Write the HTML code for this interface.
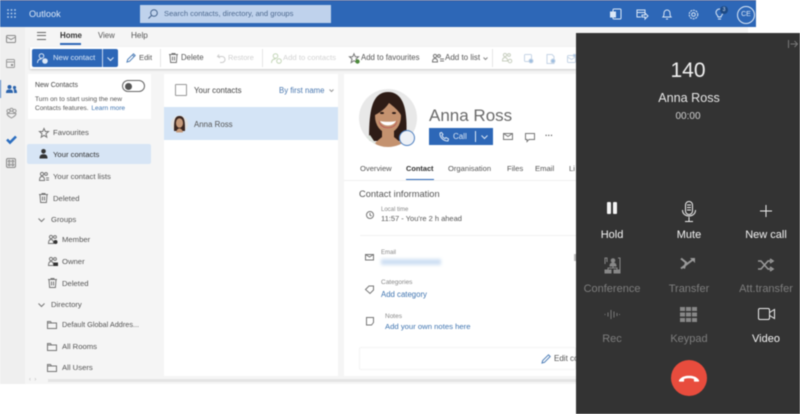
<!DOCTYPE html>
<html><head><meta charset="utf-8">
<style>
html,body{margin:0;padding:0;background:#fff;width:800px;height:414px;overflow:hidden}
body{position:relative;font-family:"Liberation Sans",sans-serif;font-size:7.7px;color:#444}
#app{position:absolute;left:0;top:0;width:800px;height:414px;overflow:hidden;filter:blur(.5px)}
.b{position:absolute}
.t{position:absolute;white-space:nowrap;line-height:12px}
svg{position:absolute;overflow:visible}
svg.l{fill:none;stroke:#777;stroke-width:1}
.lk{color:#3f74b0}
.w{color:#f4f4f4;font-size:11px;text-align:center;width:76px}
.g{color:#7d7d7d;font-size:11px;text-align:center;width:76px}
</style></head><body><div id="app">

<!-- page bg -->
<div class="b" style="left:0;top:27px;width:576px;height:357px;background:#f5f5f5"></div>
<div class="b" style="left:0;top:27px;width:25px;height:357px;background:#efefef"></div>
<div class="b" style="left:576px;top:27px;width:172px;height:6px;background:#f5f5f5"></div>

<!-- header -->
<div class="b" style="left:0;top:0;width:756px;height:27px;background:#2d67b7"></div>
<div class="b" style="left:0;top:0;width:756px;height:1px;background:#4a5f95"></div>
<svg width="10" height="10" style="left:7px;top:9px" fill="#bcd2ee"><circle cx="1" cy="1" r=".9"/><circle cx="4.5" cy="1" r=".9"/><circle cx="8" cy="1" r=".9"/><circle cx="1" cy="4.5" r=".9"/><circle cx="4.5" cy="4.5" r=".9"/><circle cx="8" cy="4.5" r=".9"/><circle cx="1" cy="8" r=".9"/><circle cx="4.5" cy="8" r=".9"/><circle cx="8" cy="8" r=".9"/></svg>
<div class="t" style="left:29px;top:8px;font-size:9.2px;color:#dbe7f6">Outlook</div>
<div class="b" style="left:140px;top:5px;width:191px;height:18px;background:#bfd2ec"></div>
<svg class="l" width="10" height="10" style="left:148px;top:9px;stroke:#44628c"><circle cx="6" cy="4" r="3.3"/><path d="M3.6 6.4 L.5 9.5"/></svg>
<div class="t" style="left:164px;top:8px;font-size:7.6px;color:#4e6a90">Search contacts, directory, and groups</div>

<svg width="12" height="11" style="left:610px;top:9px"><rect x="3" y="0" width="8" height="10" rx="1" fill="none" stroke="#dbe7f6"/><rect x="0" y="2.5" width="6" height="6" fill="#dbe7f6"/></svg>
<svg class="l" width="12" height="11" style="left:636px;top:9px;stroke:#dbe7f6"><path d="M9 4V1H1v7h4M1 3.5h8M6 6h3V4l3 3-3 3V8H6z"/></svg>
<svg class="l" width="10" height="11" style="left:662px;top:9px;stroke:#dbe7f6"><path d="M1 8c1-1 1-2 1-4a3 3 0 0 1 6 0c0 2 0 3 1 4zM4 10h2"/></svg>
<svg class="l" width="11" height="11" style="left:688px;top:9px;stroke:#dbe7f6"><circle cx="5.5" cy="5.5" r="1.8"/><circle cx="5.5" cy="5.5" r="4.3" stroke-dasharray="2 .8"/></svg>
<svg class="l" width="9" height="11" style="left:715px;top:9px;stroke:#dbe7f6"><path d="M3 10h3M3 8c0-2-2-2-2-4.500a3.500 3.500 0 0 1 7 0C8 6 6 6 6 8z"/></svg>
<div class="b" style="left:720px;top:6px;width:8px;height:8px;border-radius:50%;background:#1d4a85;color:#dbe7f6;font-size:5px;line-height:8px;text-align:center">3</div>
<div class="b" style="left:737px;top:6px;width:16px;height:16px;border:1px solid #dbe7f6;border-radius:50%;color:#dbe7f6;font-size:7px;line-height:16px;text-align:center">CE</div>

<!-- left rail -->
<svg class="l" width="11" height="9" style="left:6px;top:35px;stroke:#8a8a8a"><rect x=".5" y=".5" width="9" height="7" rx="1"/><path d="M.5 2l4.500 2.500L9.500 2"/></svg>
<svg class="l" width="10" height="10" style="left:6px;top:59px;stroke:#9a9a9a"><rect x=".5" y=".5" width="8" height="8" rx="1"/><path d="M.5 3h8"/><rect x="5" y="5" width="2" height="2" fill="#8a8a8a" stroke="none"/></svg>
<div class="b" style="left:0;top:80px;width:1px;height:18px;background:#4d7fc0"></div>
<svg width="11" height="9" style="left:6px;top:85px" fill="#2b64ad"><circle cx="3.500" cy="2" r="2"/><circle cx="8.500" cy="2.500" r="1.600"/><path d="M0 8c0-3 1-3.500 3.500-3.500S7 5 7 8zM8 8c0-2 0-3-.5-3.800 2-.4 3.500 0 3.500 3.800z"/></svg>
<svg class="l" width="11" height="11" style="left:6px;top:108px;stroke:#999"><circle cx="2.500" cy="3" r="1.600"/><circle cx="8.500" cy="3" r="1.600"/><circle cx="5.500" cy="1.800" r="1.500"/><path d="M1 5.500c0 2 2 3 4.500 4.500C8 8.500 10 7.500 10 5.500z"/></svg>
<svg width="11" height="9" style="left:6px;top:135px" fill="none" stroke="#2d6fc0" stroke-width="2.600"><path d="M1 4.500l3 3 6-6"/></svg>
<svg class="l" width="10" height="10" style="left:6px;top:158px;stroke:#888"><rect x=".5" y=".5" width="9" height="9" rx="1.500"/><circle cx="3.200" cy="3.200" r="1"/><circle cx="6.800" cy="3.200" r="1"/><circle cx="3.200" cy="6.800" r="1"/><circle cx="6.800" cy="6.800" r="1"/></svg>

<!-- tabs -->
<div class="b" style="left:37px;top:32px;width:9px;height:1px;background:#666;box-shadow:0 3px 0 #666,0 7px 0 #666"></div>
<div class="t" style="left:60px;top:30px;font-size:7.9px;color:#333;font-weight:bold">Home</div>
<div class="b" style="left:60px;top:43px;width:21px;height:1.500px;background:#2d67b7"></div>
<div class="t" style="left:98px;top:30px;color:#555;font-size:7.8px">View</div>
<div class="t" style="left:131px;top:30px;color:#555;font-size:8.2px">Help</div>

<!-- ribbon -->
<div class="b" style="left:30px;top:47px;width:546px;height:22px;background:#fff;box-shadow:0 1px 2px rgba(0,0,0,.18)"></div>
<div class="b" style="left:32px;top:49px;width:86px;height:18px;background:#2d67b7;border-radius:2px"></div>
<div class="b" style="left:102px;top:49px;width:1px;height:18px;background:#c8d9ef"></div>
<svg class="l" width="11" height="11" style="left:37px;top:53px;stroke:#dbe7f6"><circle cx="4.500" cy="3" r="2.300"/><path d="M.5 10c0-3 1.500-4 4-4"/><circle cx="8" cy="8" r="2.300" fill="#dbe7f6"/></svg>
<div class="t" style="left:53px;top:52px;color:#dce8f7;font-size:7.7px">New contact</div>
<svg class="l" width="7" height="4" style="left:107px;top:57px;stroke:#dce8f7"><path d="M.5.500l3 3 3-3"/></svg>
<svg class="l" width="10" height="10" style="left:126px;top:53px;stroke:#4f7fb8"><path d="M1 9l.7-2.500L7.500.800l1.700 1.700L3.500 8.300zM6.500 2l1.700 1.700"/></svg>
<div class="t" style="left:139px;top:52px;color:#555;font-size:7.6px">Edit</div>
<div class="b" style="left:160px;top:49px;width:1px;height:18px;background:#e6e6e6"></div>
<svg class="l" width="9" height="10" style="left:169px;top:53px"><path d="M0 1.500h9M3 1.500V.5h3v1M1 1.500l.6 8h5.800l.6-8M3.500 3.500v4M5.500 3.500v4"/></svg>
<div class="t" style="left:181px;top:52px;color:#555;font-size:7.8px">Delete</div>
<svg class="l" width="9" height="9" style="left:217px;top:54px;stroke:#ccc"><path d="M2 .5L.5 2.500 3 4M.8 2.500H5a3 3 0 0 1 0 6H3"/></svg>
<div class="t" style="left:228px;top:52px;color:#d0d0d0;font-size:7.4px">Restore</div>
<div class="b" style="left:262px;top:49px;width:1px;height:18px;background:#e6e6e6"></div>
<svg class="l" width="11" height="11" style="left:271px;top:53px;stroke:#c4d6b8"><circle cx="4.500" cy="3" r="2.300"/><path d="M.5 10c0-3 1.500-4 4-4"/><circle cx="8" cy="8" r="2.300"/></svg>
<div class="t" style="left:283px;top:52px;color:#d3d3d3;font-size:7.7px">Add to contacts</div>
<svg class="l" width="11" height="11" style="left:349px;top:53px"><path d="M5 .8l1.300 3h3.200L7 6l.8 3.500L5 7.700 2.200 9.500 3 6 .5 3.800h3.200z"/><circle cx="8.500" cy="8.500" r="2.200" fill="#4d8a3c" stroke="none"/></svg>
<div class="t" style="left:361px;top:52px;color:#555;font-size:7.8px">Add to favourites</div>
<svg class="l" width="12" height="9" style="left:432px;top:54px"><circle cx="3" cy="2" r="1.600"/><circle cx="7" cy="2" r="1.400"/><path d="M.5 8c0-2.500 1-3.500 2.500-3.500S5.500 5.500 5.500 8zM8 5h4M8 7h4"/></svg>
<div class="t" style="left:445px;top:52px;color:#555;font-size:8px">Add to list</div>
<svg class="l" width="5" height="3" style="left:483px;top:57px;stroke:#888"><path d="M.5.500l2 2 2-2"/></svg>
<div class="b" style="left:492px;top:49px;width:1px;height:18px;background:#e6e6e6"></div>
<svg class="l" width="10" height="10" style="left:502px;top:53px;stroke:#c8cfc0"><circle cx="3" cy="2" r="1.600"/><circle cx="7" cy="2" r="1.400"/><path d="M.5 8c0-2.500 1-3.500 2.500-3.500S5.500 5.500 5.500 8z"/><circle cx="8" cy="8" r="1.800"/></svg>
<svg class="l" width="10" height="10" style="left:524px;top:54px;stroke:#c6d5e6"><rect x=".5" y=".5" width="7" height="7" rx="1"/><circle cx="7" cy="7" r="2" fill="#9dbde0"/></svg>
<svg class="l" width="10" height="10" style="left:546px;top:54px;stroke:#c6d5e6"><path d="M1 .5h5l2 2v7H1z"/><circle cx="7" cy="7" r="2" fill="#9dbde0"/></svg>
<svg class="l" width="10" height="10" style="left:567px;top:54px;stroke:#c6d5e6"><rect x=".5" y="1.500" width="8" height="7" rx="1"/><path d="M.5 3l4 2.500 4-2.500"/><circle cx="7.500" cy="1.500" r="1.300" fill="#9dbde0"/></svg>

<!-- new contacts card -->
<div class="b" style="left:28px;top:74px;width:123px;height:45px;background:#fff"></div>
<div class="t" style="left:35px;top:80px;font-size:6.9px;color:#444">New Contacts</div>
<div class="b" style="left:122px;top:80px;width:21px;height:10px;border:1px solid #666;border-radius:6px;background:#fff"></div>
<div class="b" style="left:125px;top:82.500px;width:7px;height:7px;border-radius:50%;background:#555"></div>
<div class="t" style="left:35px;top:94px;font-size:6.6px;color:#555">Turn on to start using the new</div>
<div class="t" style="left:35px;top:103px;font-size:6.6px;color:#555">Contacts features. <span class="lk" style="margin-left:1px">Learn more</span></div>

<!-- nav -->
<svg class="l" width="10" height="10" style="left:39px;top:128px"><path d="M5 .5l1.300 3h3.200L7 5.700l.8 3.500L5 7.400 2.200 9.200 3 5.700.5 3.500h3.200z"/></svg>
<div class="t" style="left:53px;top:127px;color:#555">Favourites</div>
<div class="b" style="left:27px;top:144px;width:124px;height:20px;background:#d7e5f5;border-radius:2px"></div>
<svg width="9" height="10" style="left:39px;top:149px" fill="#333"><circle cx="4.500" cy="2.300" r="2.300"/><path d="M.5 9.500c0-3 1-4.300 4-4.300s4 1.300 4 4.300z"/></svg>
<div class="t" style="left:53px;top:149px;color:#333">Your contacts</div>
<svg class="l" width="10" height="9" style="left:39px;top:172px"><circle cx="3" cy="2" r="1.600"/><circle cx="7" cy="2" r="1.400"/><path d="M.5 8.500c0-3 1-4 2.500-4s2.500 1 2.500 4zM7 6h3M7 8h3"/></svg>
<div class="t" style="left:53px;top:170.500px;color:#555">Your contact lists</div>
<svg class="l" width="9" height="10" style="left:39px;top:193px"><path d="M0 1.500h9M3 1.500V.5h3v1M1 1.500l.6 8h5.800l.6-8M3.500 3.500v4M5.500 3.500v4"/></svg>
<div class="t" style="left:53px;top:192.500px;color:#555">Deleted</div>
<svg class="l" width="7" height="4" style="left:38px;top:218px"><path d="M.5.500l3 3 3-3"/></svg>
<div class="t" style="left:51px;top:214px;color:#555">Groups</div>
<svg class="l" width="10" height="9" style="left:48px;top:235px"><circle cx="3" cy="2" r="1.600"/><circle cx="7" cy="2" r="1.400"/><path d="M.5 8.500c0-3 1-4 2.500-4s2.500 1 2.500 4z"/><circle cx="7.500" cy="7" r="2" fill="#333" stroke="none"/></svg>
<div class="t" style="left:62px;top:233.500px;color:#555">Member</div>
<svg class="l" width="10" height="9" style="left:48px;top:257px"><circle cx="3" cy="2" r="1.600"/><circle cx="7" cy="2" r="1.400"/><path d="M.5 8.500c0-3 1-4 2.500-4s2.500 1 2.500 4z"/><rect x="5.500" y="5.500" width="4.500" height="3.500" fill="#333" stroke="none"/></svg>
<div class="t" style="left:62px;top:255.500px;color:#555">Owner</div>
<svg class="l" width="9" height="10" style="left:48px;top:278px"><path d="M0 1.500h9M3 1.500V.5h3v1M1 1.500l.6 8h5.800l.6-8M3.500 3.500v4M5.500 3.500v4"/></svg>
<div class="t" style="left:62px;top:277.500px;color:#555">Deleted</div>
<svg class="l" width="7" height="4" style="left:38px;top:303px"><path d="M.5.500l3 3 3-3"/></svg>
<div class="t" style="left:51px;top:299px;color:#555">Directory</div>
<svg class="l" width="10" height="8" style="left:47px;top:321px"><path d="M.5 7.500V.5h3l1 1.500h5v5.500zM.5 2h4"/></svg>
<div class="t" style="left:62px;top:319px;color:#555;font-size:7.3px">Default Global Addres...</div>
<svg class="l" width="10" height="8" style="left:47px;top:343px"><path d="M.5 7.500V.5h3l1 1.500h5v5.500zM.5 2h4"/></svg>
<div class="t" style="left:62px;top:340.500px;color:#555">All Rooms</div>
<svg class="l" width="10" height="8" style="left:47px;top:364px"><path d="M.5 7.500V.5h3l1 1.500h5v5.500zM.5 2h4"/></svg>
<div class="t" style="left:62px;top:362px;color:#555">All Users</div>
<div class="b" style="left:48px;top:379px;width:528px;height:3px;background:#e4e4e4"></div>
<div class="t" style="left:29px;top:374px;font-size:6px;color:#bbb">‹&nbsp;&nbsp;›</div>

<!-- list -->
<div class="b" style="left:164px;top:74px;width:174px;height:302px;background:#fff"></div>
<div class="b" style="left:175px;top:84px;width:10px;height:10px;border:1px solid #999;border-radius:1px"></div>
<div class="t" style="left:194px;top:84.500px;color:#444;font-size:7.9px">Your contacts</div>
<div class="t" style="left:279px;top:84.500px;color:#4a78b0;font-size:7.8px">By first name</div>
<svg class="l" width="5" height="3" style="left:329px;top:89px;stroke:#999"><path d="M.5.500l2 2 2-2"/></svg>
<div class="b" style="left:164px;top:107px;width:174px;height:33px;background:#d4e4f6"></div>
<svg width="17" height="18" viewBox="0 0 17 18" style="left:171px;top:115px"><circle cx="8.500" cy="9" r="8.500" fill="#e2e2e2"/><path d="M3 16C3 7 3 1 8.500 1S14 7 14 16z" fill="#3a2620"/><ellipse cx="8.500" cy="8" rx="3.500" ry="4.800" fill="#c69a7a"/><path d="M5 17.500c.8-3 2-4 3.500-4s2.700 1 3.500 4z" fill="#c69a7a"/></svg>
<div class="t" style="left:194px;top:118.500px;color:#555;font-size:7.900px">Anna Ross</div>

<!-- detail card -->
<div class="b" style="left:344px;top:74px;width:232px;height:302px;background:#fff"></div>
<svg width="58" height="58" viewBox="0 0 58 58" style="left:359px;top:89px">
<clipPath id="c"><circle cx="29" cy="29" r="29"/></clipPath>
<circle cx="29" cy="29" r="29" fill="#e8e8e8"/>
<g clip-path="url(#c)">
<path d="M10 52C10 24 12 3 29 3s20 21 18 49z" fill="#2e1c16"/>
<ellipse cx="29" cy="27" rx="13" ry="17" fill="#c4926f"/>
<path d="M16 26C15 12 23 9 29 9c7 0 14 3 13 17-3-5-8-9-12-12-3 5-8 9-14 12z" fill="#2e1c16"/>
<path d="M21 32c3 6 13 6 16 0-4 1-12 1-16 0z" fill="#fff"/>
<path d="M20 31c1 10 17 10 18 0 .5 2-1 8-9 8s-9.500-6-9-8z" fill="#b8434f"/>
<path d="M23 42h12v6l12 10H11l12-10z" fill="#c4926f"/>
<path d="M4 50l7-4 8 12H4z" fill="#dfe5df"/>
<ellipse cx="23" cy="24" rx="2" ry="1" fill="#2e1c16"/><ellipse cx="35" cy="24" rx="2" ry="1" fill="#2e1c16"/>
</g></svg>
<div class="b" style="left:399px;top:130px;width:14px;height:14px;border-radius:50%;background:#eef1f6;border:1.500px solid #4d7fc0"></div>
<div class="t" style="left:429px;top:106px;font-size:17px;line-height:20px;color:#6a6a6a">Anna Ross</div>
<div class="b" style="left:429px;top:128px;width:64px;height:17px;background:#2d67b7"></div>
<svg class="l" width="10" height="10" style="left:439px;top:132px;stroke:#dbe7f6"><path d="M1 1c-.5 4 3 8 8 8l.5-2L7 5.500 6 6.500C4.500 6 3.500 5 3 3.500L4 2.500 2.500.5z"/></svg>
<div class="t" style="left:453px;top:131px;color:#dbe7f6;font-size:8px">Call</div>
<div class="b" style="left:475px;top:131px;width:1px;height:11px;background:#dbe7f6"></div>
<svg class="l" width="7" height="4" style="left:481px;top:135px;stroke:#dbe7f6"><path d="M.5.500l3 3 3-3"/></svg>
<svg class="l" width="10" height="7" style="left:503px;top:133px"><rect x=".5" y=".5" width="9" height="6"/><path d="M.5.500l4.500 3 4.500-3"/></svg>
<svg class="l" width="10" height="9" style="left:525px;top:133px"><path d="M.5.500h9v6H4L2 8.500v-2H.5z"/></svg>
<div class="t" style="left:545px;top:130px;color:#555;font-size:8px;font-weight:bold">···</div>

<div class="t" style="left:360px;top:163px;color:#555;font-size:7.600px">Overview</div>
<div class="t" style="left:406px;top:163px;color:#333;font-size:7.400px;font-weight:bold">Contact</div>
<div class="b" style="left:406px;top:179px;width:28px;height:1.500px;background:#2d67b7"></div>
<div class="t" style="left:448px;top:163px;color:#555;font-size:7.600px">Organisation</div>
<div class="t" style="left:507px;top:163px;color:#555;font-size:7.700px">Files</div>
<div class="t" style="left:535px;top:163px;color:#555;font-size:7.700px">Email</div>
<div class="t" style="left:569px;top:163px;color:#555;font-size:7.700px">Li</div>
<div class="b" style="left:344px;top:180px;width:232px;height:1px;background:#f0f0f0"></div>
<div class="t" style="left:359px;top:188px;color:#555;font-size:9.300px">Contact information</div>

<svg class="l" width="8" height="8" style="left:366px;top:211px"><circle cx="4" cy="4" r="3.500"/><path d="M4 2v2.200l1.500.8"/></svg>
<div class="t" style="left:381px;top:204px;color:#888;font-size:6px">Local time</div>
<div class="t" style="left:381px;top:213px;color:#555;font-size:7.500px">11:57 - You're 2 h ahead</div>
<div class="b" style="left:360px;top:235px;width:216px;height:1px;background:#f2f2f2"></div>

<svg class="l" width="9" height="7" style="left:365px;top:254px"><rect x=".5" y=".5" width="8" height="5.500"/><path d="M.5.500l4 2.500 4-2.500"/></svg>
<div class="t" style="left:381px;top:247px;color:#888;font-size:6px">Email</div>
<div class="b" style="left:381px;top:259px;width:60px;height:6px;background:#cfe0f3;filter:blur(1.500px)"></div>
<div class="b" style="left:574px;top:254px;width:2px;height:7px;background:#bbb"></div>

<svg class="l" width="9" height="9" style="left:365px;top:285px"><path d="M.5 4.500L4 1h4.500v4L5 8.500z"/></svg>
<div class="t" style="left:381px;top:277px;color:#888;font-size:6.500px">Categories</div>
<div class="t" style="left:381px;top:288.500px;color:#3f74b0;font-size:7.800px">Add category</div>

<svg class="l" width="8" height="9" style="left:366px;top:317px"><path d="M.5.500h7v5L5.500 8H.5z"/></svg>
<div class="t" style="left:385px;top:311px;color:#888;font-size:6.500px">Notes</div>
<div class="t" style="left:385px;top:320.500px;color:#3f74b0;font-size:7.700px">Add your own notes here</div>

<div class="b" style="left:359px;top:347px;width:217px;height:23px;border:1px solid #f4f4f4;border-radius:2px;box-sizing:border-box"></div>
<svg class="l" width="10" height="10" style="left:541px;top:354px;stroke:#4f7fb8"><path d="M1 9l.7-2.500L7.500.800l1.700 1.700L3.500 8.300z"/></svg>
<div class="t" style="left:554px;top:353px;color:#555;font-size:8px">Edit co</div>

<!-- dark panel -->
<div class="b" style="left:576px;top:33px;width:224px;height:381px;background:#333333"></div>
<svg class="l" width="10" height="8" style="left:788px;top:40px;stroke:#777"><path d="M.5 0v8M2.500 4h7M6.500 1l3 3-3 3"/></svg>
<div class="t" style="left:576px;top:59px;width:224px;text-align:center;font-size:21px;line-height:24px;color:#f0f0f0">140</div>
<div class="t" style="left:577px;top:90px;width:224px;text-align:center;font-size:12.600px;line-height:16px;color:#e6e6e6">Anna Ross</div>
<div class="t" style="left:576px;top:110px;width:224px;text-align:center;font-size:10px;line-height:13px;color:#cfcfcf">00:00</div>

<div class="b" style="left:607px;top:202px;width:4px;height:12px;background:#f4f4f4;border-radius:1px"></div>
<div class="b" style="left:613px;top:202px;width:4px;height:12px;background:#f4f4f4;border-radius:1px"></div>
<svg class="l" width="14" height="22" style="left:682px;top:201px;stroke:#eee"><rect x="3.500" y=".5" width="7" height="13" rx="3.500"/><path d="M.5 9c0 8 13 8 13 0M7 16v4M3 20.500h8M5 4h4M5 6.500h4M5 9h4"/></svg>
<svg class="l" width="12" height="12" style="left:760px;top:205px;stroke:#eee"><path d="M6 0v12M0 6h12"/></svg>
<div class="t w" style="left:574px;top:228.500px">Hold</div>
<div class="t w" style="left:651px;top:228.500px">Mute</div>
<div class="t w" style="left:728px;top:228.500px">New call</div>

<svg class="l" width="17" height="17" style="left:604px;top:257px;stroke:#888"><path d="M3 5V1H1v6M14 1h2v12h-2"/><circle cx="9" cy="3.500" r="1.800" fill="#888"/><path d="M6 9c0-2 1-3 3-3s3 1 3 3z" fill="#888"/><rect x="1" y="13" width="6" height="3" fill="#888"/><rect x="10" y="13" width="6" height="3" fill="#888"/><path d="M9 9v2H4v2M9 11h4v2"/></svg>
<svg width="16" height="13" style="left:680px;top:257px" fill="none" stroke="#999" stroke-width="2"><path d="M1 1.500l5 4-2 6M1 11.500l12-9"/><path d="M10 1h5v5z" fill="#999" stroke="none"/></svg>
<svg class="l" width="16" height="12" style="left:758px;top:259px;stroke:#999;stroke-width:1.500"><path d="M0 2h3l7 8h3M0 10h3l7-8h3M12 0l3 2-3 2M12 8l3 2-3 2"/></svg>
<div class="t g" style="left:574px;top:283px">Conference</div>
<div class="t g" style="left:651px;top:283px">Transfer</div>
<div class="t g" style="left:728px;top:283px">Att.transfer</div>

<svg class="l" width="16" height="11" style="left:604px;top:309px;stroke:#777"><path d="M1 5v1M4 3.500v4M7 1v9M10 2.500v6M13 4v3M15.500 5v1"/></svg>
<svg width="17" height="15" style="left:680px;top:307px" fill="#888"><rect x="0" y="0" width="5" height="4"/><rect x="6" y="0" width="5" height="4"/><rect x="12" y="0" width="5" height="4"/><rect x="0" y="5.500" width="5" height="4"/><rect x="6" y="5.500" width="5" height="4"/><rect x="12" y="5.500" width="5" height="4"/><rect x="0" y="11" width="5" height="4"/><rect x="6" y="11" width="5" height="4"/><rect x="12" y="11" width="5" height="4"/></svg>
<svg class="l" width="17" height="12" style="left:758px;top:308px;stroke:#eee"><rect x=".5" y=".5" width="11" height="11" rx="1.500"/><path d="M11.500 4.500L16.500 1.500v9L11.500 7.500"/></svg>
<div class="t g" style="left:574px;top:332.500px">Rec</div>
<div class="t g" style="left:651px;top:332.500px">Keypad</div>
<div class="t w" style="left:728px;top:332.500px">Video</div>

<div class="b" style="left:671px;top:359.500px;width:36px;height:36px;border-radius:50%;background:#e84c3d"></div>
<svg width="20" height="7" style="left:679px;top:375px"><path d="M0 5.200C2.500 1.600 6 .8 10 .8s7.500.8 10 4.400c.3.600 0 1.400-.6 1.400h-3.600c-.6 0-.9-.4-.9-.9V4C13 3.500 11.500 3.300 10 3.300S7 3.500 5.100 4v1.700c0 .5-.3.900-.9.900H.6C0 6.600-.3 5.800 0 5.200z" style="fill:#fff"/></svg>

</div></body></html>
